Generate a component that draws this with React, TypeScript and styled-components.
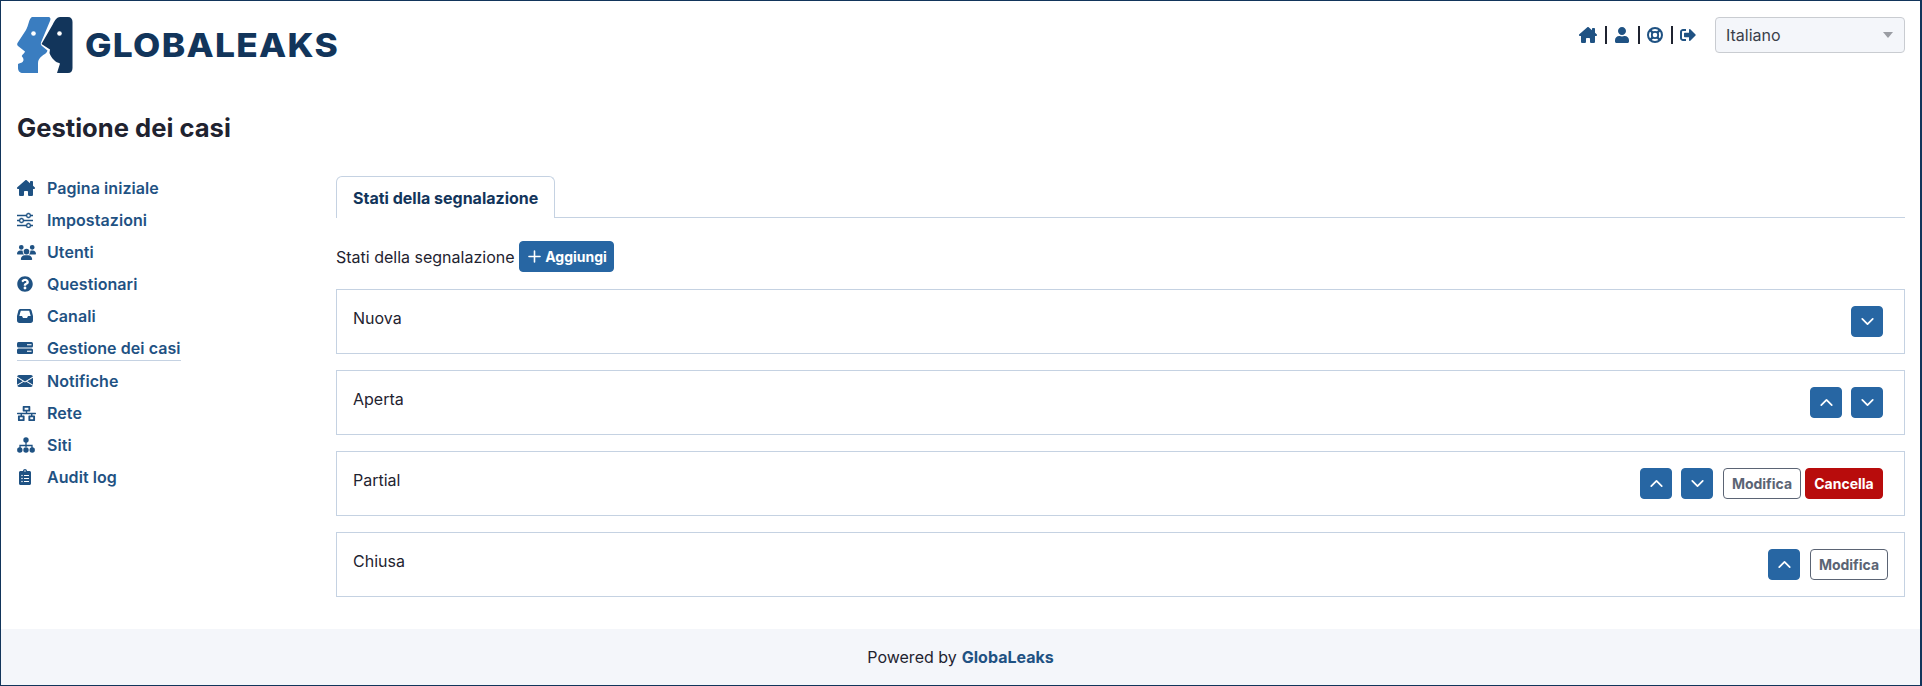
import React from 'react';
import styled, { createGlobalStyle } from 'styled-components';
import { FaUser, FaSignOutAlt, FaQuestionCircle, FaClipboardList, FaNetworkWired } from 'react-icons/fa';
import { FaHouseChimney, FaUsers } from 'react-icons/fa6';
import { BsSliders, BsEnvelopeFill } from 'react-icons/bs';
import { ChevronUp, ChevronDown, Plus } from 'lucide-react';

const Global = createGlobalStyle`
  html, body { margin: 0; padding: 0; background: #fff; }
  body { font-family: Inter, "Liberation Sans", sans-serif; color: #1f2330; font-size: 16px; }
  * { box-sizing: border-box; }
`;

const Frame = styled.div`
  width: 1922px; height: 686px; border: 1px solid #12355b; border-right-width: 2px;
  display: flex; flex-direction: column; overflow: hidden;
`;
const Header = styled.header`
  display: flex; justify-content: space-between; align-items: flex-start; padding: 16px 15px 0 16px; height: 109px;
`;
const Brand = styled.div`display: flex; align-items: center; gap: 11px; height: 56px;`;
const BrandName = styled.span`
  font-family: Inter, sans-serif; font-weight: 800; font-size: 33px; letter-spacing: 1.2px; color: #12355b; line-height: 1;
  transform: scaleX(1.07); transform-origin: left center;
`;
const TopRight = styled.div`display: flex; align-items: center; height: 36px;`;
const TopLink = styled.a`display: flex; align-items: center; color: #1f5283;`;
const Sep = styled.span`width: 2px; height: 18px; background: #1f2330; margin: 0 7px 0 8px;`;
const LangSelect = styled.div`
  width: 190px; height: 36px; margin-left: 19px; background: #f4f6fa; border: 1px solid #c9ccd1; border-radius: 4px;
  display: flex; align-items: center; justify-content: space-between; padding: 0 11px 0 10px; font-size: 16px; color: #3a3f4a;
`;
const Caret = styled.span`
  width: 0; height: 0; border-left: 5px solid transparent; border-right: 5px solid transparent; border-top: 6px solid #9a9da3;
`;
const PageTitle = styled.h1`
  margin: 0; padding-left: 16px; font-size: 25.6px; font-weight: 700; line-height: 36px; color: #1f2330; height: 62px;
`;
const Body = styled.div`display: flex; flex: 1; padding: 0 15px 0 16px;`;
const Side = styled.nav`width: 319px; flex: none;`;
const NavRow = styled.div<{ $active?: boolean }>`
  height: ${p => (p.$active ? 33 : 32)}px; padding-top: 4px;
`;
const NavItem = styled.a<{ $active?: boolean }>`
  display: flex; width: fit-content; align-items: center; height: ${p => (p.$active ? 25 : 24)}px; color: #1f5283; font-weight: 600; letter-spacing: 0.07px; font-size: 16px;
  ${p => (p.$active ? 'border-bottom: 1px solid #c5d2e2;' : '')}
`;
const NavIcon = styled.span`width: 30px; flex: none; display: flex; align-items: center;`;
const Main = styled.main`flex: 1; min-width: 0; padding-top: 4px;`;
const Tabs = styled.div`display: flex; height: 42px; border-bottom: 1px solid #c5d2e2;`;
const Tab = styled.div`
  height: 42px; width: 219px; padding: 0 0 0 16px; display: flex; align-items: center; font-size: 16px; font-weight: 700; color: #12355b;
  background: #fff; border: 1px solid #c5d2e2; border-bottom: 0; border-radius: 6px 6px 0 0; white-space: nowrap;
`;
const AddRow = styled.div`display: flex; align-items: center; gap: 4px; margin: 23px 0 17px; height: 31px; font-size: 16px;`;
const Btn = styled.button<{ $kind: 'primary' | 'outline' | 'danger' }>`
  font-family: inherit; font-size: 14px; font-weight: 700; height: 31px; width: 78px; border-radius: 4px; padding: 0; cursor: pointer;
  display: inline-flex; align-items: center; justify-content: center;
  ${p => p.$kind === 'primary' ? 'background:#2766a3;border:1px solid #2766a3;color:#fff;' :
    p.$kind === 'danger' ? 'background:#b80c0c;border:1px solid #b80c0c;color:#fff;' :
    'background:#fff;border:1px solid #5b6474;color:#5b6474;'}
`;
const AddBtn = styled(Btn)`width: 95px; gap: 1px;`;
const IconBtn = styled(Btn)`width: 32px;`;
const Card = styled.div`
  display: flex; justify-content: space-between; align-items: flex-start; height: 65px; margin-bottom: 16px; border: 1px solid #c5d2e2;
  padding: 16px 16px 0 16px; font-size: 16px;
`;
const CardName = styled.span`line-height: 24px;`;
const Actions = styled.div`display: flex; align-items: center;`;
const Gap = styled.span<{ $w: number }>`display: inline-block; width: ${p => p.$w}px;`;
const Footer = styled.footer`
  height: 56px; flex: none; background: #f4f6fa; display: flex; align-items: center; justify-content: center; font-size: 16px; gap: 5px; color: #1f2330;
`;
const FooterLink = styled.a`color: #1f5283; font-weight: 700;`;

const Logo = () => (
  <svg width="57" height="56" viewBox="17 17 57 56">
    <path fill="#3a7dc0" d="M32 17H48C50.500 17 51 19 50 21L41 42.500C40.500 44 41 45 42 46L47.500 50.500C47 53 44 54.500 42 56C39.500 58 38 60 38 63V73H23C20 73 18 71 18 68V64C19 63 22 63 23 61.500C24 60 23.500 58 22 56.500C21 55.500 24 54 25 51.500L18 46C17 45 17 44 17.500 43L26 30C28.500 26 29 18 32 17Z" />
    <path fill="#12355b" d="M60 17H68C71 17 72.500 19 72.500 22V68C72.500 71 71 73 68 73H57L60 63.500C58 62.500 55.500 62 54 60C51.500 57.500 50 55 49.500 53L50 49.500L41.500 44L53 24C55 20 57 17 60 17Z" />
    <circle cx="33.500" cy="33.500" r="2.300" fill="#fff" />
    <circle cx="59.500" cy="33.500" r="2.300" fill="#fff" />
  </svg>
);

const ServerIcon = () => (
  <svg width="16" height="12" viewBox="0 0 16 12">
    <rect width="16" height="5.500" rx="1.500" fill="currentColor" />
    <rect y="6.500" width="16" height="5.500" rx="1.500" fill="currentColor" />
    <rect x="10" y="2.200" width="4.500" height="1.100" fill="#fff" />
    <rect x="10" y="8.700" width="4.500" height="1.100" fill="#fff" />
  </svg>
);

const SitesIcon = () => (
  <svg width="18" height="16" viewBox="0 0 18 16">
    <circle cx="9" cy="3" r="2.700" fill="currentColor" />
    <path d="M9 5V10M3 11V8.500H15V11" stroke="currentColor" strokeWidth="1.300" fill="none" />
    <circle cx="2.800" cy="13" r="2.700" fill="currentColor" />
    <circle cx="9" cy="13" r="2.700" fill="currentColor" />
    <circle cx="15.200" cy="13" r="2.700" fill="currentColor" />
  </svg>
);

const InboxIcon = () => (
  <svg width="16" height="14" viewBox="0 0 16 14">
    <path fill="currentColor" fillRule="evenodd" d="M3.500 0H12.500C13.500 0 14.300 .6 14.600 1.500L16 7V11.500C16 13 15 14 13.500 14H2.500C1 14 0 13 0 11.500V7L1.400 1.500C1.700 .6 2.500 0 3.500 0ZM3.800 1.800 2.300 7H5L6 9H10L11 7H13.700L12.200 1.800Z" />
  </svg>
);

const LifeRingIcon = () => (
  <svg width="16" height="16" viewBox="0 0 16 16" fill="none" stroke="currentColor">
    <circle cx="8" cy="8" r="7" strokeWidth="2" />
    <circle cx="8" cy="8" r="3.200" strokeWidth="1.800" />
    <path d="M3 3 5.700 5.700M13 3 10.300 5.700M3 13 5.700 10.300M13 13 10.300 10.300" strokeWidth="2.400" />
  </svg>
);

const nav: [React.ReactNode, string, boolean?][] = [
  [<FaHouseChimney size={18} />, 'Pagina iniziale'],
  [<BsSliders size={16} strokeWidth={0.5} stroke="currentColor" />, 'Impostazioni'],
  [<FaUsers size={19} />, 'Utenti'],
  [<FaQuestionCircle size={16} />, 'Questionari'],
  [<InboxIcon />, 'Canali'],
  [<ServerIcon />, 'Gestione dei casi', true],
  [<BsEnvelopeFill size={16} />, 'Notifiche'],
  [<FaNetworkWired size={19} />, 'Rete'],
  [<SitesIcon />, 'Siti'],
  [<FaClipboardList size={16} />, 'Audit log'],
];

const Up = () => <IconBtn $kind="primary"><ChevronUp size={21} /></IconBtn>;
const Down = () => <IconBtn $kind="primary"><ChevronDown size={21} /></IconBtn>;

export default function App() {
  return (
    <Frame>
      <Global />
      <Header>
        <Brand><Logo /><BrandName>GLOBALEAKS</BrandName></Brand>
        <TopRight>
          <TopLink><FaHouseChimney size={18} /></TopLink><Sep />
          <TopLink><FaUser size={16} /></TopLink><Sep />
          <TopLink><LifeRingIcon /></TopLink><Sep />
          <TopLink><FaSignOutAlt size={16} /></TopLink>
          <LangSelect>Italiano<Caret /></LangSelect>
        </TopRight>
      </Header>
      <PageTitle>Gestione dei casi</PageTitle>
      <Body>
        <Side>
          {nav.map(([icon, label, active]) => (
            <NavRow key={label} $active={active}>
              <NavItem $active={active}><NavIcon>{icon}</NavIcon>{label}</NavItem>
            </NavRow>
          ))}
        </Side>
        <Main>
          <Tabs><Tab>Stati della segnalazione</Tab></Tabs>
          <AddRow>Stati della segnalazione <AddBtn $kind="primary"><Plus size={19} strokeWidth={2} />Aggiungi</AddBtn></AddRow>
          <Card>
            <CardName>Nuova</CardName>
            <Actions><Down /><Gap $w={5} /></Actions>
          </Card>
          <Card>
            <CardName>Aperta</CardName>
            <Actions><Up /><Gap $w={9} /><Down /><Gap $w={5} /></Actions>
          </Card>
          <Card>
            <CardName>Partial</CardName>
            <Actions><Up /><Gap $w={9} /><Down /><Gap $w={10} /><Btn $kind="outline">Modifica</Btn><Gap $w={4} /><Btn $kind="danger">Cancella</Btn><Gap $w={5} /></Actions>
          </Card>
          <Card>
            <CardName>Chiusa</CardName>
            <Actions><Up /><Gap $w={10} /><Btn $kind="outline">Modifica</Btn></Actions>
          </Card>
        </Main>
      </Body>
      <Footer>Powered by <FooterLink>GlobaLeaks</FooterLink></Footer>
    </Frame>
  );
}
